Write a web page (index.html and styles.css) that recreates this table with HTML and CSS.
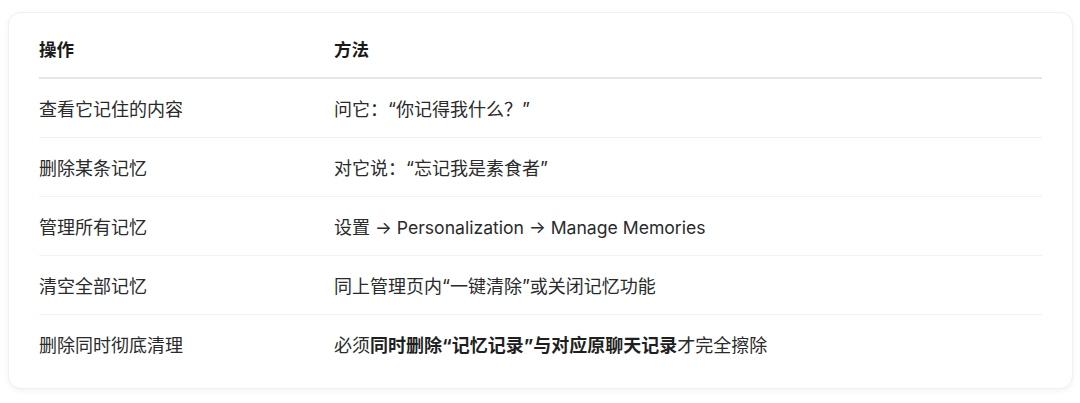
FILE: index.html
```html
<!DOCTYPE html>
<html lang="zh-CN">
<head>
<meta charset="utf-8">
<link rel="stylesheet" href="styles.css">
</head>
<body>
<div class="card">
  <table class="tbl">
    <thead>
      <tr><th class="c1">操作</th><th>方法</th></tr>
    </thead>
    <tbody>
      <tr><td class="c1">查看它记住的内容</td><td>问它：“你记得我什么？”</td></tr>
      <tr><td class="c1">删除某条记忆</td><td>对它说：“忘记我是素食者”</td></tr>
      <tr><td class="c1">管理所有记忆</td><td>设置 <span class="en">→ Personalization → Manage Memories</span></td></tr>
      <tr><td class="c1">清空全部记忆</td><td>同上管理页内“一键清除”或关闭记忆功能</td></tr>
      <tr><td class="c1">删除同时彻底清理</td><td>必须<b>同时删除“记忆记录”与对应原聊天记录</b>才完全擦除</td></tr>
    </tbody>
  </table>
</div>
</body>
</html>
```

FILE: styles.css
```css
html, body {
  margin: 0;
  padding: 0;
  background: #ffffff;
}
body {
  padding: 12px 7px 15px 8px;
  font-family: "Inter", "Noto Sans CJK SC", sans-serif;
  color: #2a2a2a;
}
.card {
  background: #ffffff;
  border: 1px solid #f0f0f0;
  border-radius: 13px;
  box-shadow: 0 2px 6px rgba(0,0,0,0.05);
  padding: 6px 30px 15px 30px;
}
.tbl {
  width: 100%;
  border-collapse: collapse;
  font-size: 18px;
}
.tbl th {
  text-align: left;
  font-weight: 700;
  color: #1a1a1a;
  font-size: 17.5px;
  height: 58px;
  padding: 0;
  border-bottom: 2px solid #e6e6e6;
}
.tbl td {
  height: 58px;
  padding: 0;
  border-bottom: 1px solid #f2f2f2;
}
.tbl tbody tr:last-child td {
  border-bottom: none;
}
.tbl .c1 {
  width: 295px;
}
.tbl b {
  font-weight: 700;
  color: #1f1f1f;
}
.en {
  font-size: 17.6px;
}
```
